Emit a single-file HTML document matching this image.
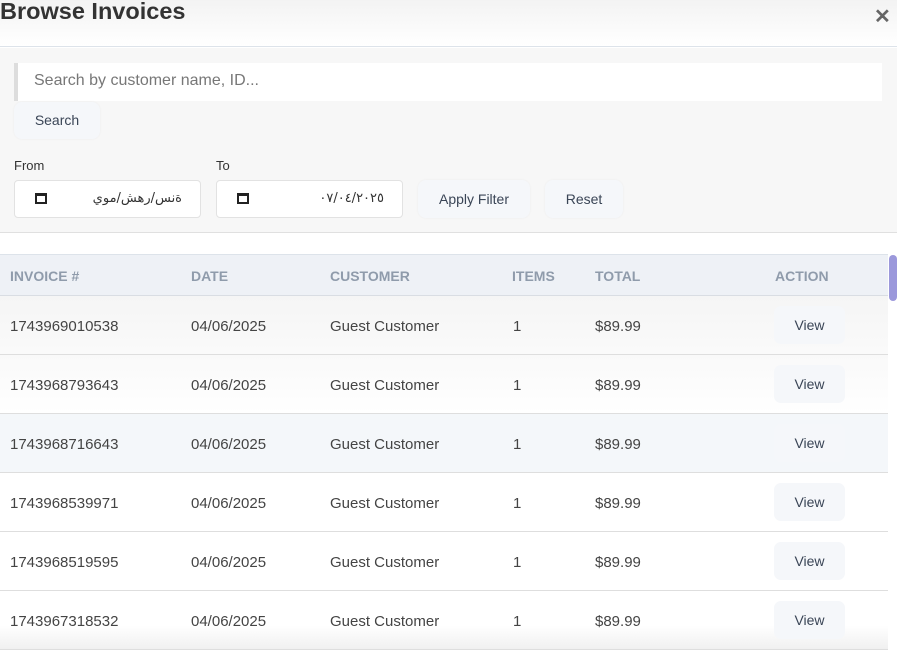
<!DOCTYPE html>
<html><head><meta charset="utf-8"><style>
*{box-sizing:border-box;margin:0;padding:0}
body{width:897px;height:650px;overflow:hidden;background:#fff;font-family:"Liberation Sans",sans-serif;position:relative;color:#333}
.hdr{position:absolute;left:0;top:0;width:897px;height:47px;background:linear-gradient(#f3f3f3,#fff);border-bottom:1px solid #dde3ea}
.title{position:absolute;left:0;top:-2px;font-size:23.5px;font-weight:bold;color:#333}
.close{position:absolute;left:874px;top:4px;font-size:20px;color:#666;font-weight:bold}
.filt{position:absolute;left:0;top:48px;width:897px;height:185px;background:#f7f7f7;border-bottom:1px solid #e0e0e0}
.search{position:absolute;left:14px;top:63px;width:868px;height:38px;background:#fff;border-left:4px solid #ddd;font-size:16px;color:#777;padding:9px 0 0 16px}
.btn{position:absolute;background:#f5f7fa;border-radius:8px;font-size:14px;color:#3a4556;text-align:center;box-shadow:0 0 2px rgba(0,0,0,.05)}
.lbl{position:absolute;font-size:13px;color:#333}
.date{position:absolute;top:180px;width:187px;height:38px;background:#fff;border:1px solid #e2e2e2;border-radius:4px;font-size:13px;color:#333}
.cal{position:absolute;left:20px;top:12px;width:12px;height:11px;border:2px solid #222;border-top-width:3px}
.dt{position:absolute;right:18px;top:10px;font-family:"DejaVu Sans",sans-serif;letter-spacing:2px}
.th{position:absolute;left:0;top:254px;width:888px;height:42px;background:#eef1f6;border-top:1px solid #dde3ea;border-bottom:1px solid #d9dde3}
.th span{position:absolute;top:13px;font-size:14px;font-weight:bold;color:#8f9bab}
.row{position:absolute;left:0;width:888px;height:59px;border-bottom:1px solid #dedede;font-size:15px;color:#444}
.row span{position:absolute;top:22px}
.v{position:absolute;left:774px;top:10px;width:71px;height:38px;background:#f5f7fa;border-radius:7px;font-size:14px;color:#3a4556;text-align:center;line-height:38px}
.sb{position:absolute;left:889px;top:255px;width:8px;height:46px;background:#9b98db;border-radius:4px}
</style></head><body>
<div class="hdr"><div class="title">Browse Invoices</div><div class="close">✕</div></div>
<div class="filt"></div>
<div class="search">Search by customer name, ID...</div>
<div class="btn" style="left:14px;top:102px;width:86px;height:37px;line-height:37px">Search</div>
<div class="lbl" style="left:14px;top:158px">From</div>
<div class="lbl" style="left:216px;top:158px">To</div>
<div class="date" style="left:14px"><div class="cal"></div><div class="dt">ة‌نس/رهش/موي</div></div>
<div class="date" style="left:216px"><div class="cal"></div><div class="dt">٠٧/٠٤/٢٠٢٥</div></div>
<div class="btn" style="left:418px;top:180px;width:112px;height:38px;line-height:38px">Apply Filter</div>
<div class="btn" style="left:545px;top:180px;width:78px;height:38px;line-height:38px">Reset</div>
<div class="th"><span style="left:10px">INVOICE #</span><span style="left:191px">DATE</span><span style="left:330px">CUSTOMER</span><span style="left:512px">ITEMS</span><span style="left:595px">TOTAL</span><span style="left:775px">ACTION</span></div>
<div class="sb"></div>
<div class="row" style="top:296px;background:linear-gradient(#f5f5f5,#fafafa)"><span style="left:10px">1743969010538</span><span style="left:191px">04/06/2025</span><span style="left:330px">Guest Customer</span><span style="left:513px">1</span><span style="left:595px">$89.99</span><div class="v">View</div></div>
<div class="row" style="top:355px;background:linear-gradient(#f9f9f9,#fff)"><span style="left:10px">1743968793643</span><span style="left:191px">04/06/2025</span><span style="left:330px">Guest Customer</span><span style="left:513px">1</span><span style="left:595px">$89.99</span><div class="v">View</div></div>
<div class="row" style="top:414px;background:#f4f7fa"><span style="left:10px">1743968716643</span><span style="left:191px">04/06/2025</span><span style="left:330px">Guest Customer</span><span style="left:513px">1</span><span style="left:595px">$89.99</span><div class="v">View</div></div>
<div class="row" style="top:473px"><span style="left:10px">1743968539971</span><span style="left:191px">04/06/2025</span><span style="left:330px">Guest Customer</span><span style="left:513px">1</span><span style="left:595px">$89.99</span><div class="v">View</div></div>
<div class="row" style="top:532px"><span style="left:10px">1743968519595</span><span style="left:191px">04/06/2025</span><span style="left:330px">Guest Customer</span><span style="left:513px">1</span><span style="left:595px">$89.99</span><div class="v">View</div></div>
<div class="row" style="top:591px;background:linear-gradient(#fff 60%,#f0f0f0)"><span style="left:10px">1743967318532</span><span style="left:191px">04/06/2025</span><span style="left:330px">Guest Customer</span><span style="left:513px">1</span><span style="left:595px">$89.99</span><div class="v">View</div></div>
</body></html>
